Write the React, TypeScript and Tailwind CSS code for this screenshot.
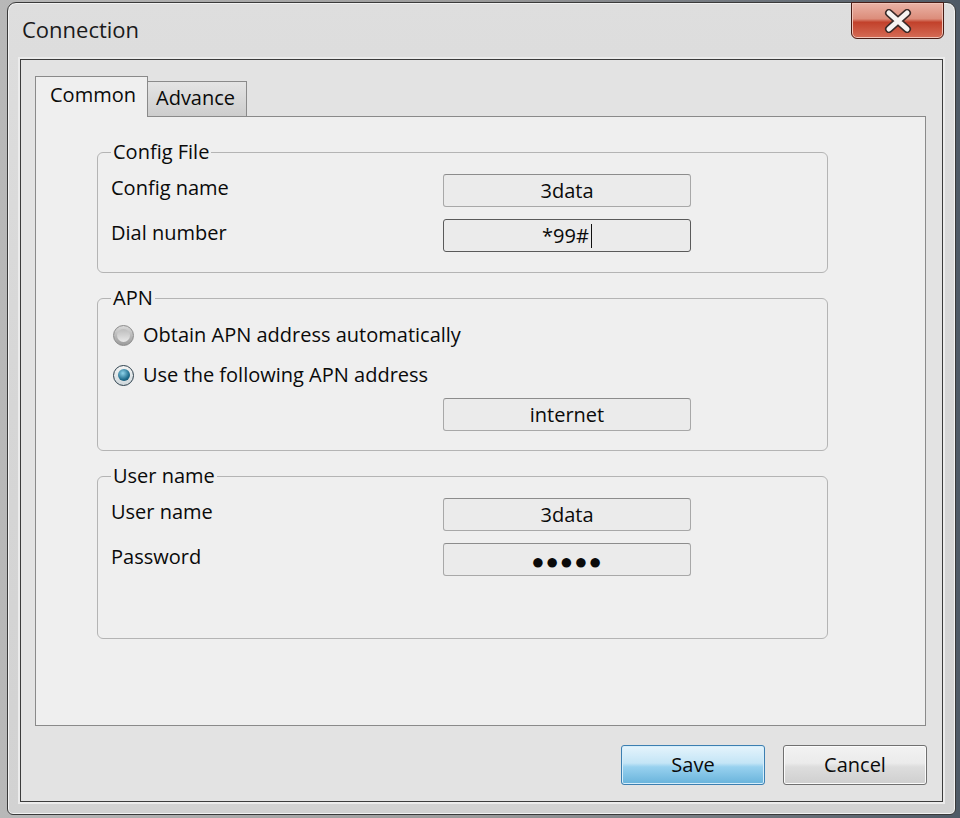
import React from 'react';

const ui = "font-['Open_Sans','Noto_Sans',sans-serif]";

const Field = ({ value, focused }: { value: React.ReactNode; focused?: boolean }) => (
  <div
    className={`w-[248px] h-[33px] rounded-[3px] border ${
      focused ? 'border-[#5a5a5a]' : 'border-[#a8a8a8] border-t-[#8c8c8c]'
    } bg-[#ebebeb] flex items-center justify-center text-[20px] leading-none text-[#0a0a0a]`}
  >
    {value}
  </div>
);

const Row = ({ label, children, className = '' }: { label: string; children: React.ReactNode; className?: string }) => (
  <div className={`flex items-center ${className}`}>
    <span className="w-[332px] -mt-[5px]">{label}</span>
    {children}
  </div>
);

const Radio = ({ checked, label, className = '' }: { checked?: boolean; label: string; className?: string }) => (
  <div className={`flex items-center h-[26px] ${className}`}>
    <span
      className={`w-[21px] h-[21px] rounded-full border flex items-center justify-center ${
        checked
          ? 'border-[#2c3f4c] bg-gradient-to-b from-[#f4f4f4] to-[#cfd8dc]'
          : 'border-[#8a8a8a] bg-gradient-to-b from-[#d9d9d9] to-[#9c9c9c]'
      }`}
    >
      {checked ? (
        <span className="w-[12px] h-[12px] rounded-full bg-[radial-gradient(circle_at_40%_35%,#8fd3ea,#1f6c8d_60%,#123f55)]" />
      ) : (
        <span className="w-[13px] h-[13px] rounded-full bg-gradient-to-b from-[#bdbdbd] to-[#e8e8e8]" />
      )}
    </span>
    <span className="ml-[9px]">{label}</span>
  </div>
);

const Group = ({ title, children, className = '' }: { title: string; children: React.ReactNode; className?: string }) => (
  <fieldset className={`w-[731px] rounded-[6px] border border-[#b4b4b4] pl-[13px] ${className}`}>
    <legend className="px-[2px] leading-[26px]">{title}</legend>
    {children}
  </fieldset>
);

export default function App() {
  return (
    <div className={`${ui} w-[960px] h-[818px] overflow-hidden bg-gradient-to-r from-[#b8b8b8] via-[#9a9a9a] to-[#4f5a66] pl-[7px] pt-[2px] text-[#0a0a0a]`}>
      <div className="w-[949px] h-[813px] rounded-t-[9px] rounded-b-[6px] border border-[#3a3a3a] bg-gradient-to-b from-[#dedede] via-[#d6d6d6] to-[#d2d2d2] shadow-[inset_0_0_0_1px_#f2f2f2] flex flex-col">
        {/* title bar */}
        <div className="h-[56px] flex justify-between pl-[14px] pr-[11px]">
          <span className="mt-[12px] text-[22px] leading-[28px] text-[#1a1a1a]">Connection</span>
          <button className="w-[93px] h-[37px] -mt-px rounded-b-[6px] border border-[#4a1d16] bg-[linear-gradient(to_bottom,#eab3a6_0%,#dc8d7b_45%,#c2412b_55%,#d56c56_100%)] shadow-[inset_0_0_0_1px_#f1c4b8] flex items-center justify-center">
            <svg width="30" height="24" viewBox="0 0 30 24">
              <path d="M6 4 L24 20 M24 4 L6 20" stroke="#3a2a28" strokeWidth="8" strokeLinecap="round" />
              <path d="M6 4 L24 20 M24 4 L6 20" stroke="#f7f4f2" strokeWidth="5" strokeLinecap="round" />
            </svg>
          </button>
        </div>

        {/* client area */}
        <div className="mx-[12px] mb-[12px] flex-1 border border-[#3c3c3c] bg-[#e3e3e3] shadow-[0_0_0_2px_#ececec] pl-[14px] pr-[17px] pt-[16px] pb-[16px] flex flex-col">
          <div className="flex items-end text-[20px] leading-none relative z-10 -mb-px">
            <div className="w-[113px] h-[41px] border border-b-0 border-[#8a8a8a] bg-[#efefef] pl-[14px] pt-[8px]">Common</div>
            <div className="w-[100px] h-[36px] -ml-px border border-[#8a8a8a] bg-gradient-to-b from-[#e4e4e4] to-[#cdcdcd] pl-[8px] pt-[6px]">Advance</div>
          </div>
          <div className="w-[891px] h-[610px] border border-[#8a8a8a] bg-[#efefef] pl-[61px] pt-[22px] text-[20px]">
            <Group title="Config File" className="pb-[20px]">
              <Row label="Config name" className="mt-[9px]">
                <Field value="3data" />
              </Row>
              <Row label="Dial number" className="mt-[12px]">
                <Field
                  focused
                  value={
                    <span className="flex items-center">
                      *99#<span className="ml-[2px] w-px h-[24px] bg-[#111]" />
                    </span>
                  }
                />
              </Row>
            </Group>

            <Group title="APN" className="mt-[12px] pb-[19px]">
              <Radio label="Obtain APN address automatically" className="mt-[11px] ml-[2px]" />
              <Radio checked label="Use the following APN address" className="mt-[14px] ml-[2px]" />
              <div className="mt-[10px] ml-[332px]">
                <Field value="internet" />
              </div>
            </Group>

            <Group title="User name" className="mt-[12px] pb-[62px]">
              <Row label="User name" className="mt-[9px]">
                <Field value="3data" />
              </Row>
              <Row label="Password" className="mt-[12px]">
                <Field value={<span className="tracking-[1px] text-[22px]">●●●●●</span>} />
              </Row>
            </Group>
          </div>

          <div className="mt-[19px] flex justify-end gap-[18px] text-[20px]">
            <button className="w-[144px] h-[40px] rounded-[3px] border border-[#3c7fb1] bg-[linear-gradient(to_bottom,#e5f4fc_0%,#c4e5f6_45%,#98d1ef_55%,#68b3db_100%)] shadow-[inset_0_0_0_1px_#d6eefb]">
              Save
            </button>
            <button className="w-[144px] h-[40px] rounded-[3px] border border-[#707070] bg-[linear-gradient(to_bottom,#f2f2f2_0%,#ebebeb_45%,#dddddd_55%,#cfcfcf_100%)] shadow-[inset_0_0_0_1px_#fbfbfb] -mr-[2px]">
              Cancel
            </button>
          </div>
        </div>
      </div>
    </div>
  );
}
